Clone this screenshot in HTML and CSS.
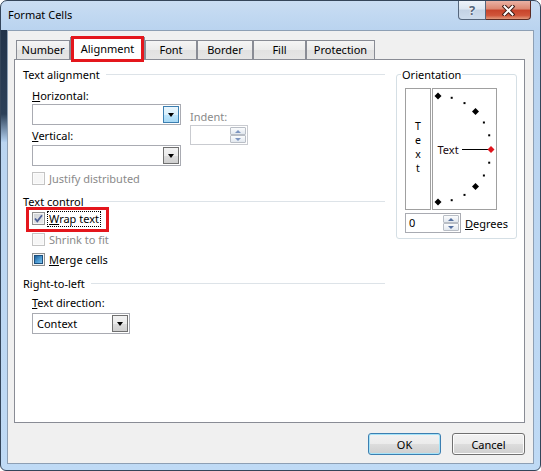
FILE: index.html
```html
<!DOCTYPE html>
<html lang="en">
<head>
    <meta charset="UTF-8">
    <meta name="viewport" content="width=device-width, initial-scale=1.0">
    <title>Format Cells</title>
    <link rel="stylesheet" href="styles.css">
</head>
<body>
    <div class="window">
        <div class="titlebar">
            <span class="title">Format Cells</span>
            <div class="caption">
                <div class="cap-btn help">?</div>
                <div class="cap-btn close">
                    <svg width="13" height="11" viewBox="0 0 13 11">
                        <path d="M2.5 1.5 L10.5 9.5 M10.5 1.5 L2.5 9.5" stroke="#3b1a14" stroke-width="4" stroke-linecap="square"/>
                        <path d="M2.5 1.5 L10.5 9.5 M10.5 1.5 L2.5 9.5" stroke="#ffffff" stroke-width="2" stroke-linecap="square"/>
                    </svg>
                </div>
            </div>
        </div>

        <div class="client">
            <div class="tabs">
                <div class="tab">Number</div>
                <div class="tab active">Alignment</div>
                <div class="tab">Font</div>
                <div class="tab">Border</div>
                <div class="tab">Fill</div>
                <div class="tab">Protection</div>
            </div>

            <div class="panel">
                <div class="left">
                    <div class="group-title">Text alignment</div>
                    <div class="group-body">
                        <div class="align-row">
                            <div class="align-col">
                                <div class="field-label"><u>H</u>orizontal:</div>
                                <div class="combo combo-wide">
                                    <div class="combo-btn hot"></div>
                                </div>
                                <div class="field-label vlabel"><u>V</u>ertical:</div>
                                <div class="combo combo-wide vcombo">
                                    <div class="combo-btn"></div>
                                </div>
                            </div>
                            <div class="indent">
                                <div class="field-label disabled">Indent:</div>
                                <div class="spin spin-indent disabled">
                                    <div class="spin-btns">
                                        <span class="up"></span>
                                        <span class="down"></span>
                                    </div>
                                </div>
                            </div>
                        </div>
                        <div class="check justify disabled">
                            <span class="box"></span>
                            <span>Justify distributed</span>
                        </div>
                    </div>

                    <div class="group-title gap-top">Text control</div>
                    <div class="group-body">
                        <div class="check wrap marked">
                            <span class="box checked">
                                <svg width="11" height="11" viewBox="0 0 11 11">
                                    <path d="M2 5.5 L4.3 8.3 L9 2.2" fill="none" stroke="#4d5f96" stroke-width="1.8"/>
                                </svg>
                            </span>
                            <span class="focus"><u>W</u>rap text</span>
                        </div>
                        <div class="check shrink disabled">
                            <span class="box"></span>
                            <span>Shrink to fit</span>
                        </div>
                        <div class="check merge">
                            <span class="box mixed"></span>
                            <span><u>M</u>erge cells</span>
                        </div>
                    </div>

                    <div class="group-title rtl-title">Right-to-left</div>
                    <div class="group-body">
                        <div class="field-label dir-label"><u>T</u>ext direction:</div>
                        <div class="combo combo-small">
                            <span class="combo-value">Context</span>
                            <div class="combo-btn"></div>
                        </div>
                    </div>
                </div>

                <fieldset class="orientation">
                    <legend>Orientation</legend>
                    <div class="orient-row">
                        <div class="vtext">
                            <span>T</span>
                            <span>e</span>
                            <span>x</span>
                            <span>t</span>
                        </div>
                        <div class="dial">
                            <svg width="63" height="120" viewBox="0 0 63 120">
                                <polygon points="5,3.5 8.5,7 5,10.5 1.5,7" fill="#000"/>
                                <rect x="17.7" y="7.8" width="2" height="2"/>
                                <rect x="30.5" y="13.1" width="2" height="2"/>
                                <polygon points="42.5,19 46,22.5 42.5,26 39,22.5" fill="#000"/>
                                <rect x="49.9" y="32.5" width="2" height="2"/>
                                <rect x="55.2" y="45.3" width="2" height="2"/>
                                <line x1="29" y1="60.5" x2="56" y2="60.5" stroke="#000" stroke-width="1"/>
                                <polygon points="58,57 61.5,60.5 58,64 54.5,60.5" fill="#e0141c"/>
                                <rect x="55.2" y="72.7" width="2" height="2"/>
                                <rect x="49.9" y="85.5" width="2" height="2"/>
                                <polygon points="42.5,94 46,97.5 42.5,101 39,97.5" fill="#000"/>
                                <rect x="30.5" y="104.9" width="2" height="2"/>
                                <rect x="17.7" y="110.2" width="2" height="2"/>
                                <polygon points="5,109.5 8.5,113 5,116.5 1.5,113" fill="#000"/>
                                <text x="4.5" y="64.5" class="dial-text">Text</text>
                            </svg>
                        </div>
                    </div>
                    <div class="degrees-row">
                        <div class="spin spin-degrees">
                            <span class="spin-value">0</span>
                            <div class="spin-btns">
                                <span class="up"></span>
                                <span class="down"></span>
                            </div>
                        </div>
                        <span><u>D</u>egrees</span>
                    </div>
                </fieldset>
            </div>

            <div class="footer">
                <button class="btn default">OK</button>
                <button class="btn">Cancel</button>
            </div>
        </div>
    </div>
</body>
</html>
```

FILE: styles.css
```css
body {
    margin: 0;
    background-color: white;
    font-family: "Noto Sans", "Open Sans", sans-serif;
    font-size: 11px;
    line-height: 15px;
    color: black;
}

/* window frame */
.window {
    width: 541px;
    height: 471px;
    box-sizing: border-box;
    border: 1px solid #34455a;
    border-radius: 7px 7px 6px 6px;
    padding: 0 6px 6px;
    display: flex;
    flex-direction: column;
    background:
        linear-gradient(#22334a, #2c4058 75%, #b5d2f1) 0 29px / 6px 112px no-repeat,
        linear-gradient(#c9ddf3, #b9d3ef 30px, #bfdaf5);
}
.titlebar {
    height: 29px;
    display: flex;
    justify-content: space-between;
    align-items: flex-start;
}
.title {
    padding: 6px 0 0 1px;
}
.caption {
    display: flex;
    margin-right: 3px;
}
.cap-btn {
    height: 19px;
    box-sizing: border-box;
    border: 1px solid #55667c;
    border-top: none;
    display: flex;
    align-items: center;
    justify-content: center;
}
.help {
    width: 28px;
    border-radius: 0 0 0 4px;
    background: linear-gradient(#eef3f9, #dce6f1 45%, #c3d2e4 50%, #cddced);
    color: #55657a;
    font-weight: bold;
    font-size: 13px;
    text-shadow: 0 0 1px #ffffff, 0 0 2px #ffffff;
}
.close {
    width: 45px;
    border-left: none;
    border-color: #5c2b22;
    border-radius: 0 0 4px 0;
    background: linear-gradient(#eab2a4, #dc8670 45%, #c7432a 50%, #d0553a 80%, #e29a7d);
}

/* client area */
.client {
    flex: 1;
    background-color: #f0f0f0;
    border: 1px solid #8d9fb4;
    padding: 6px 8px 0 6px;
    display: flex;
    flex-direction: column;
}
.tabs {
    display: flex;
    align-items: flex-end;
    height: 22px;
    padding-left: 2px;
}
.tab {
    height: 19px;
    box-sizing: border-box;
    border: 1px solid #898c95;
    border-bottom: none;
    background: linear-gradient(#f5f5f5, #ebebeb 50%, #e1e1e1 51%, #e6e6e6);
    text-align: center;
    line-height: 18px;
}
.tab:nth-child(1) { width: 54px; }
.tab:nth-child(2) { width: 75px; }
.tab:nth-child(3) { width: 52px; }
.tab:nth-child(4) { width: 56px; }
.tab:nth-child(5) { width: 53px; }
.tab:nth-child(6) { width: 69px; }
.tab.active {
    position: relative;
    z-index: 1;
    height: 23px;
    margin-bottom: -1px;
    background: white;
    line-height: 21px;
}
/* red highlight drawn on top of the screenshot */
.tab.active::after {
    content: "";
    position: absolute;
    left: 0;
    right: 0;
    top: -2px;
    bottom: -2px;
    border: 3px solid #e4161c;
}

.panel {
    flex: 1;
    background: white;
    border: 1px solid #898c95;
    display: flex;
    align-items: flex-start;
    padding: 7px 7px 0 8px;
}
.left {
    width: 362px;
}
.group-title {
    display: flex;
    align-items: center;
    gap: 6px;
}
.group-title::after {
    content: "";
    flex: 1;
    border-top: 1px solid #dde3e8;
}
.gap-top { margin-top: 8px; }
.rtl-title { margin-top: 9px; }
.group-body {
    margin-left: 9px;
}

.align-row {
    display: flex;
    margin-top: 6px;
}
.align-col {
    width: 149px;
}
.vlabel { margin-top: 3px; }
.indent {
    margin-left: 9px;
    margin-top: 21px;
}
.disabled {
    color: #8a8a8a;
}

/* combo boxes */
.combo {
    height: 21px;
    box-sizing: border-box;
    border: 1px solid #a9abb2;
    background: white;
    display: flex;
    justify-content: flex-end;
    align-items: stretch;
    padding: 1px;
    margin-top: 1px;
}
.combo-wide { width: 149px; }
.vcombo { margin-top: 2px; }
.combo-small {
    width: 98px;
    margin-top: 3px;
}
.combo-value {
    flex: 1;
    padding-left: 3px;
    line-height: 17px;
}
.combo-btn {
    width: 16px;
    box-sizing: border-box;
    border: 1px solid #707070;
    background: linear-gradient(#f2f2f2, #ebebeb 50%, #dddddd 51%, #cfcfcf);
    display: flex;
    align-items: center;
    justify-content: center;
}
.combo-btn.hot {
    border-color: #3c7fb1;
    background: linear-gradient(#eaf6fd, #d9f0fc 50%, #bee6fd 51%, #a7d9f5);
}
.combo-btn::before {
    content: "";
    border-left: 3.5px solid transparent;
    border-right: 3.5px solid transparent;
    border-top: 4px solid black;
}

/* spin boxes */
.spin {
    height: 20px;
    box-sizing: border-box;
    border: 1px solid #a9abb2;
    background: white;
    display: flex;
    justify-content: flex-end;
    padding: 1px;
}
.spin-indent {
    width: 58px;
    margin-top: 1px;
    border-color: #c9cbd0;
}
.spin-degrees {
    width: 59px;
}
.spin-value {
    flex: 1;
    padding-left: 2px;
    line-height: 16px;
}
.spin-btns {
    width: 16px;
    display: flex;
    flex-direction: column;
}
.spin-btns span {
    flex: 1;
    box-sizing: border-box;
    border: 1px solid #b9bec6;
    border-radius: 1px;
    background: linear-gradient(#fbfcfd, #e2e8ef);
    display: flex;
    align-items: center;
    justify-content: center;
}
.spin-btns .up::before {
    content: "";
    border-left: 3px solid transparent;
    border-right: 3px solid transparent;
    border-bottom: 3px solid #5570a0;
}
.spin-btns .down::before {
    content: "";
    border-left: 3px solid transparent;
    border-right: 3px solid transparent;
    border-top: 3px solid #5570a0;
}
.spin.disabled .spin-btns .up::before {
    border-bottom-color: #7d95c0;
}
.spin.disabled .spin-btns .down::before {
    border-top-color: #7d95c0;
}

/* check boxes */
.check {
    display: flex;
    align-items: center;
    gap: 4px;
    height: 15px;
}
.justify { margin-top: 5px; }
.wrap { margin-top: 2px; }
.shrink { margin-top: 6px; }
.merge { margin-top: 5px; }
.box {
    width: 13px;
    height: 13px;
    box-sizing: border-box;
    border: 1px solid #8e8f8f;
    background: linear-gradient(135deg, #d0d4d9, #f7f7f7);
    box-shadow: inset 0 0 0 1px #f4f4f4;
    display: flex;
    align-items: center;
    justify-content: center;
}
.check.disabled .box {
    border-color: #c4c4c4;
    background: #f6f6f6;
    box-shadow: inset 0 0 0 1px #fbfbfb;
}
.box.checked {
    background: linear-gradient(135deg, #cfd2d6, #e8e9eb);
}
.box.mixed::before {
    content: "";
    width: 7px;
    height: 7px;
    border: 1px solid #1d4f7d;
    background: linear-gradient(135deg, #205f97, #4c9bd3 55%, #7cc1ea);
}
.focus {
    border: 1px dotted black;
    padding: 0 1px;
    margin-left: -2px;
    line-height: 14px;
}
.wrap.marked {
    position: relative;
}
/* red highlight drawn on top of the screenshot */
.wrap.marked::after {
    content: "";
    position: absolute;
    left: -6px;
    width: 83px;
    top: -4px;
    bottom: -6px;
    box-sizing: border-box;
    border: 3px solid #e4161c;
}
.dir-label { margin-top: 4px; }

/* orientation */
.orientation {
    margin: 0 0 0 11px;
    width: 121px;
    box-sizing: border-box;
    border: 1px solid #d5dfe5;
    border-radius: 3px;
    padding: 6px 8px 5px;
    min-width: 0;
}
.orientation legend {
    padding: 0 1px;
    margin-left: -4px;
}
.orient-row {
    display: flex;
    gap: 1px;
}
.vtext {
    width: 26px;
    height: 122px;
    box-sizing: border-box;
    border: 1px solid #a0a0a0;
    display: flex;
    flex-direction: column;
    align-items: center;
    justify-content: center;
    padding-bottom: 4px;
}
.vtext span {
    height: 14px;
    line-height: 14px;
    font-size: 10.5px;
}
.dial {
    width: 65px;
    height: 122px;
    box-sizing: border-box;
    border: 1px solid #a0a0a0;
}
.dial svg {
    display: block;
}
.dial-text {
    font-family: "Noto Sans", "Open Sans", sans-serif;
    font-size: 11px;
    fill: #1a0a10;
}
.degrees-row {
    display: flex;
    align-items: center;
    gap: 4px;
    margin-top: 3px;
}

/* buttons */
.footer {
    display: flex;
    justify-content: flex-end;
    gap: 11px;
    padding: 10px 0 8px;
}
.btn {
    width: 73px;
    height: 22px;
    padding: 0;
    font: inherit;
    color: black;
    border: 1px solid #707070;
    border-radius: 3px;
    background: linear-gradient(#f2f2f2, #ebebeb 50%, #dddddd 51%, #cfcfcf);
    box-shadow: inset 0 0 0 1px #fcfcfc;
}
.btn.default {
    border-color: #3c7fb1;
    box-shadow: inset 0 0 0 1px #a6e3f8;
}
```
